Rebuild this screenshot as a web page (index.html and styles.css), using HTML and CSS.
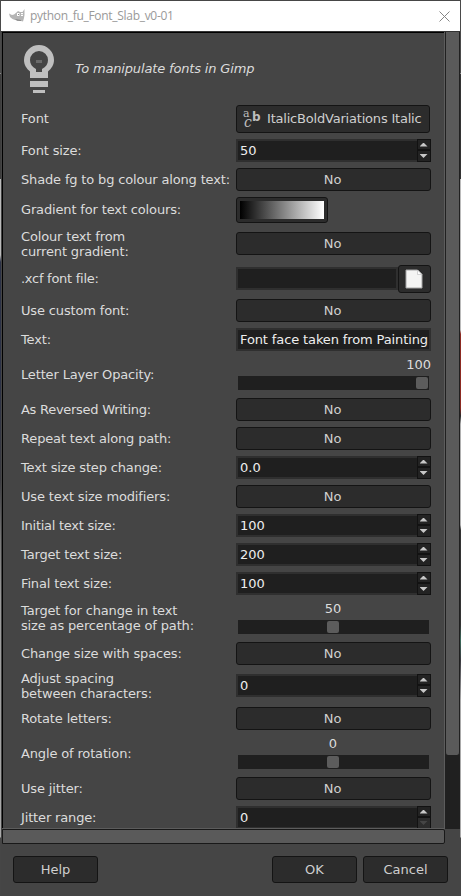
FILE: index.html
```html
<!DOCTYPE html>
<html lang="en">
<head>
<meta charset="utf-8">
<title>python_fu_Font_Slab_v0-01</title>
<link rel="stylesheet" href="styles.css">
</head>
<body>
<div class="window">
  <header class="titlebar">
    <svg class="app-icon" width="16" height="14" viewBox="0 0 16 14"><path fill="#b5b5b5" d="M0 4.500 3 6l2-.5L8 3l1-1 2 1h2.500l2-3v6L15 9l-1 3.500-4-1L6 11 3.500 10 1 8z"/><path fill="#fff" d="M8 4h2.500v3H8zM12 4h2v3h-2z"/><path fill="#888" d="M9 5h1v1H9zM12.500 5h1v1h-1zM6 10l6 1v1l-4-.3z"/></svg>
    <span class="title">python_fu_Font_Slab_v0-01</span>
    <svg class="close" width="11" height="11" viewBox="0 0 11 11"><path d="M.5.5l10 10M10.500.5l-10 10" stroke="#858585" fill="none"/></svg>
  </header>
  <div class="scroller">
    <main class="viewport">
      <div class="intro">
        <svg class="bulb" width="30" height="48" viewBox="0 0 30 48"><path fill="#bfbfbf" fill-rule="evenodd" d="M15 0a15 15 0 0 1 15 15c0 5-2.500 8.500-6 11.500V33H6v-6.500C2.500 23.500 0 20 0 15A15 15 0 0 1 15 0zm0 6A9 9 0 0 0 6 15c0 4 2 7 6 9v3h6v-3c4-2 6-5 6-9A9 9 0 0 0 15 6zM6 36h18v6H6zM9 45h12v3H9z"/><path fill="#6b6b6b" d="M12 15h6v3h-6z"/></svg>
        <em>To manipulate fonts in Gimp</em>
      </div>
      <div class="form">
        <label class="raised">Font</label>
        <button class="btn font-btn"><svg width="20" height="20" viewBox="0 0 20 20"><g fill="#bdbdbd"><text x="1" y="8" class="ga">a</text><text x="10" y="12" class="gb">b</text><text x="2" y="18" class="gc">c</text></g></svg><span>ItalicBoldVariations Italic</span></button>
        <label>Font size:</label>
        <div class="spin"><span>50</span><i class="up"></i><i class="down"></i></div>
        <label class="shade">Shade fg to bg colour along text:</label>
        <button class="btn">No</button>
        <label class="raised">Gradient for text colours:</label>
        <button class="btn gradient-btn"><span></span></button>
        <label>Colour text from<br>current gradient:</label>
        <button class="btn raised">No</button>
        <label class="tight raised">.xcf font file:</label>
        <div class="file"><div class="entry"></div><button class="btn"><svg width="18" height="20" viewBox="0 0 18 20"><path d="M1 1h11.500l4.500 4.500V19H1z" fill="#f5f5f4" stroke="#a6a6a6"/><path d="M12.500 1v4.500H17z" fill="#fff" stroke="#c2c2c2" stroke-width=".7"/></svg></button></div>
        <label>Use custom font:</label>
        <button class="btn">No</button>
        <label>Text:</label>
        <div class="entry">Font face taken from Painting</div>
        <label>Letter Layer Opacity:</label>
        <div class="slider end"><span>100</span><div><b></b></div></div>
        <label class="tight">As Reversed Writing:</label>
        <button class="btn">No</button>
        <label>Repeat text along path:</label>
        <button class="btn">No</button>
        <label>Text size step change:</label>
        <div class="spin"><span>0.0</span><i class="up"></i><i class="down"></i></div>
        <label>Use text size modifiers:</label>
        <button class="btn">No</button>
        <label class="tight">Initial text size:</label>
        <div class="spin"><span>100</span><i class="up"></i><i class="down"></i></div>
        <label>Target text size:</label>
        <div class="spin"><span>200</span><i class="up"></i><i class="down"></i></div>
        <label>Final text size:</label>
        <div class="spin"><span>100</span><i class="up"></i><i class="down"></i></div>
        <label class="raised">Target for change in text<br>size as percentage of path:</label>
        <div class="slider"><span>50</span><div><b></b></div></div>
        <label>Change size with spaces:</label>
        <button class="btn">No</button>
        <label>Adjust spacing<br>between characters:</label>
        <div class="spin raised"><span>0</span><i class="up"></i><i class="down"></i></div>
        <label>Rotate letters:</label>
        <button class="btn">No</button>
        <label>Angle of rotation:</label>
        <div class="slider"><span>0</span><div><b></b></div></div>
        <label>Use jitter:</label>
        <button class="btn">No</button>
        <label>Jitter range:</label>
        <div class="spin at-min"><span>0</span><i class="up"></i><i class="down"></i></div>
      </div>
    </main>
    <div class="vbar"><div></div></div>
    <div class="hbar"></div>
  </div>
  <footer class="actions">
    <button class="btn">Help</button>
    <button class="btn ok">OK</button>
    <button class="btn">Cancel</button>
  </footer>
</div>
</body>
</html>
```
FILE: styles.css
```css
* { box-sizing: border-box; }
body {
  margin: 0;
  width: 461px;
  height: 896px;
  overflow: hidden;
  padding: 1px 1px 0;
  /* desktop showing at the window's left and right edges */
  background:
    linear-gradient(#4a4a4a 73px, #8a8a8a 73px 74px, #3c3c3c 74px 179px, #bbb 179px 255px, #2b3146 262px 380px, #3a3a3f 480px, #777 540px, #999 600px, #aaa 837px, #464646 838px) 0 0 / 1px 896px no-repeat,
    linear-gradient(#4a4a4a 73px, #8a8a8a 73px 74px, #333 74px 179px, #bbb 179px 330px, #8c2a22 334px 408px, #2a2a2a 416px, #b0b0b0 424px 525px, #333 530px 625px, #3c6a5c 640px, #3a3a3f 660px, #aaa 700px 837px, #464646 838px) 460px 0 / 1px 896px no-repeat,
    #464646;
  color: #dcdcdc;
  font: 13px/15px "DejaVu Sans", sans-serif;
}
.window { height: 895px; background: #454545; display: flex; flex-direction: column; }
.titlebar {
  height: 30px;
  background: #fff;
  display: flex;
  align-items: center;
  padding: 0 10px 0 8px;
  color: #999;
  font: 12px/16px "Open Sans", sans-serif;
}
.title { margin-left: 5px; letter-spacing: -.3px; }
.close { margin-left: auto; }
.scroller {
  height: 813px;
  padding: 1px 0 0 1px;
  background: linear-gradient(90deg, #333, #333) no-repeat 0 0 / 100% 1px;
  display: grid;
  grid-template: 797px 15px / 443px 15px;
}
.viewport {
  overflow: hidden;
  border: solid #5c5c5c;
  border-width: 0 1px 1px 0;
  box-shadow: inset 1px 1px #000;
  padding: 13px 0 0 19px;
}
.intro { display: flex; height: 48px; align-items: center; padding-left: 3px; margin-bottom: 12px; }
.intro em { margin-left: 21px; letter-spacing: -.16px; padding-bottom: 1px; }
.form {
  display: grid;
  grid-template-columns: 209px 195px;
  grid-template-rows: 28px 23px 23px 26px 30px 28px 23px 23px 35px repeat(7, 23px) 35px 23px 30px 23px 35px 23px 23px;
  gap: 6px;
  align-items: center;
}
label { white-space: nowrap; letter-spacing: -.15px; }
.tight { letter-spacing: -.27px; }
.shade { letter-spacing: -.16px; }
.form .raised { margin-bottom: 1px; }
.btn {
  height: 23px;
  padding: 0 2px 0 0;
  margin: 0;
  border: 1px solid #141414;
  border-radius: 3px;
  background: #2c2c2c;
  color: #cfcfcf;
  font: inherit;
}
.font-btn { width: 194px; height: 28px; display: flex; align-items: center; padding: 0 0 0 5px; }
.font-btn svg { flex: none; overflow: visible; }
.font-btn span { margin-left: 5px; padding-bottom: 1px; white-space: nowrap; letter-spacing: -.2px; }
.ga { font: 11px "DejaVu Serif", serif; }
.gb { font: bold 12px "DejaVu Sans", sans-serif; }
.gc { font: italic 14px "DejaVu Serif", serif; }
.gradient-btn { width: 92px; height: 26px; padding: 3px; }
.gradient-btn span { display: block; height: 18px; background: linear-gradient(90deg, #000, #fff); }
.entry { height: 23px; border: 2px solid #2f2f2f; background: #1f1f1f; padding: 2px 2px; white-space: nowrap; color: #eee; letter-spacing: -.12px; }
.file { display: flex; align-items: center; }
.file .entry { width: 162px; margin-bottom: 1px; }
.file .btn { width: 33px; height: 28px; display: grid; place-items: center; }
.spin {
  height: 23px;
  display: grid;
  grid-template: 11px 12px / 181px 14px;
  background: #151515;
}
.spin span { grid-row: 1 / 3; height: 23px; background: #1f1f1f; border: 2px solid #2f2f2f; border-right: 0; padding: 2px 2px; color: #eee; }
.spin i { display: grid; place-items: center; background: #232323; border: 1px solid #121212; }
.spin i::after { content: ""; width: 8px; height: 4px; margin-right: 1px; background: #c8c8c8; }
.spin .up::after { clip-path: polygon(50% 0, 100% 100%, 0 100%); }
.spin .down::after { clip-path: polygon(0 0, 100% 0, 50% 100%); }
.spin.at-min .down { background: #2c2c2c; }
.spin.at-min .down::after { background: #454545; }
.slider { height: 35px; text-align: center; display: flex; flex-direction: column; justify-content: space-between; padding-bottom: 2px; }
.slider span { padding-right: 1px; }
.slider div { margin: 0 2px; height: 14px; background: #1f1f1f; display: flex; justify-content: center; padding: 1px 1px 1px 0; }
.slider b { width: 12px; height: 12px; border-radius: 2px; background: #5c5c5c; }
.slider.end { text-align: right; }
.slider.end span { padding-right: 0; }
.slider.end div { justify-content: flex-end; }
.vbar { background: #202020; }
.vbar div { height: 723px; background: #5a5a5a; border: 1px solid #202020; border-width: 0 1px 0 1px; border-radius: 0 0 3px 3px; }
.hbar { background: #5a5a5a; border: 1px solid #191919; border-radius: 0 2px 2px 0; }
.actions { height: 52px; display: flex; gap: 6px; padding: 12px 12px 0 12px; }
.actions .btn { width: 85px; height: 27px; padding: 0; }
.actions .ok { margin-left: auto; }
```
